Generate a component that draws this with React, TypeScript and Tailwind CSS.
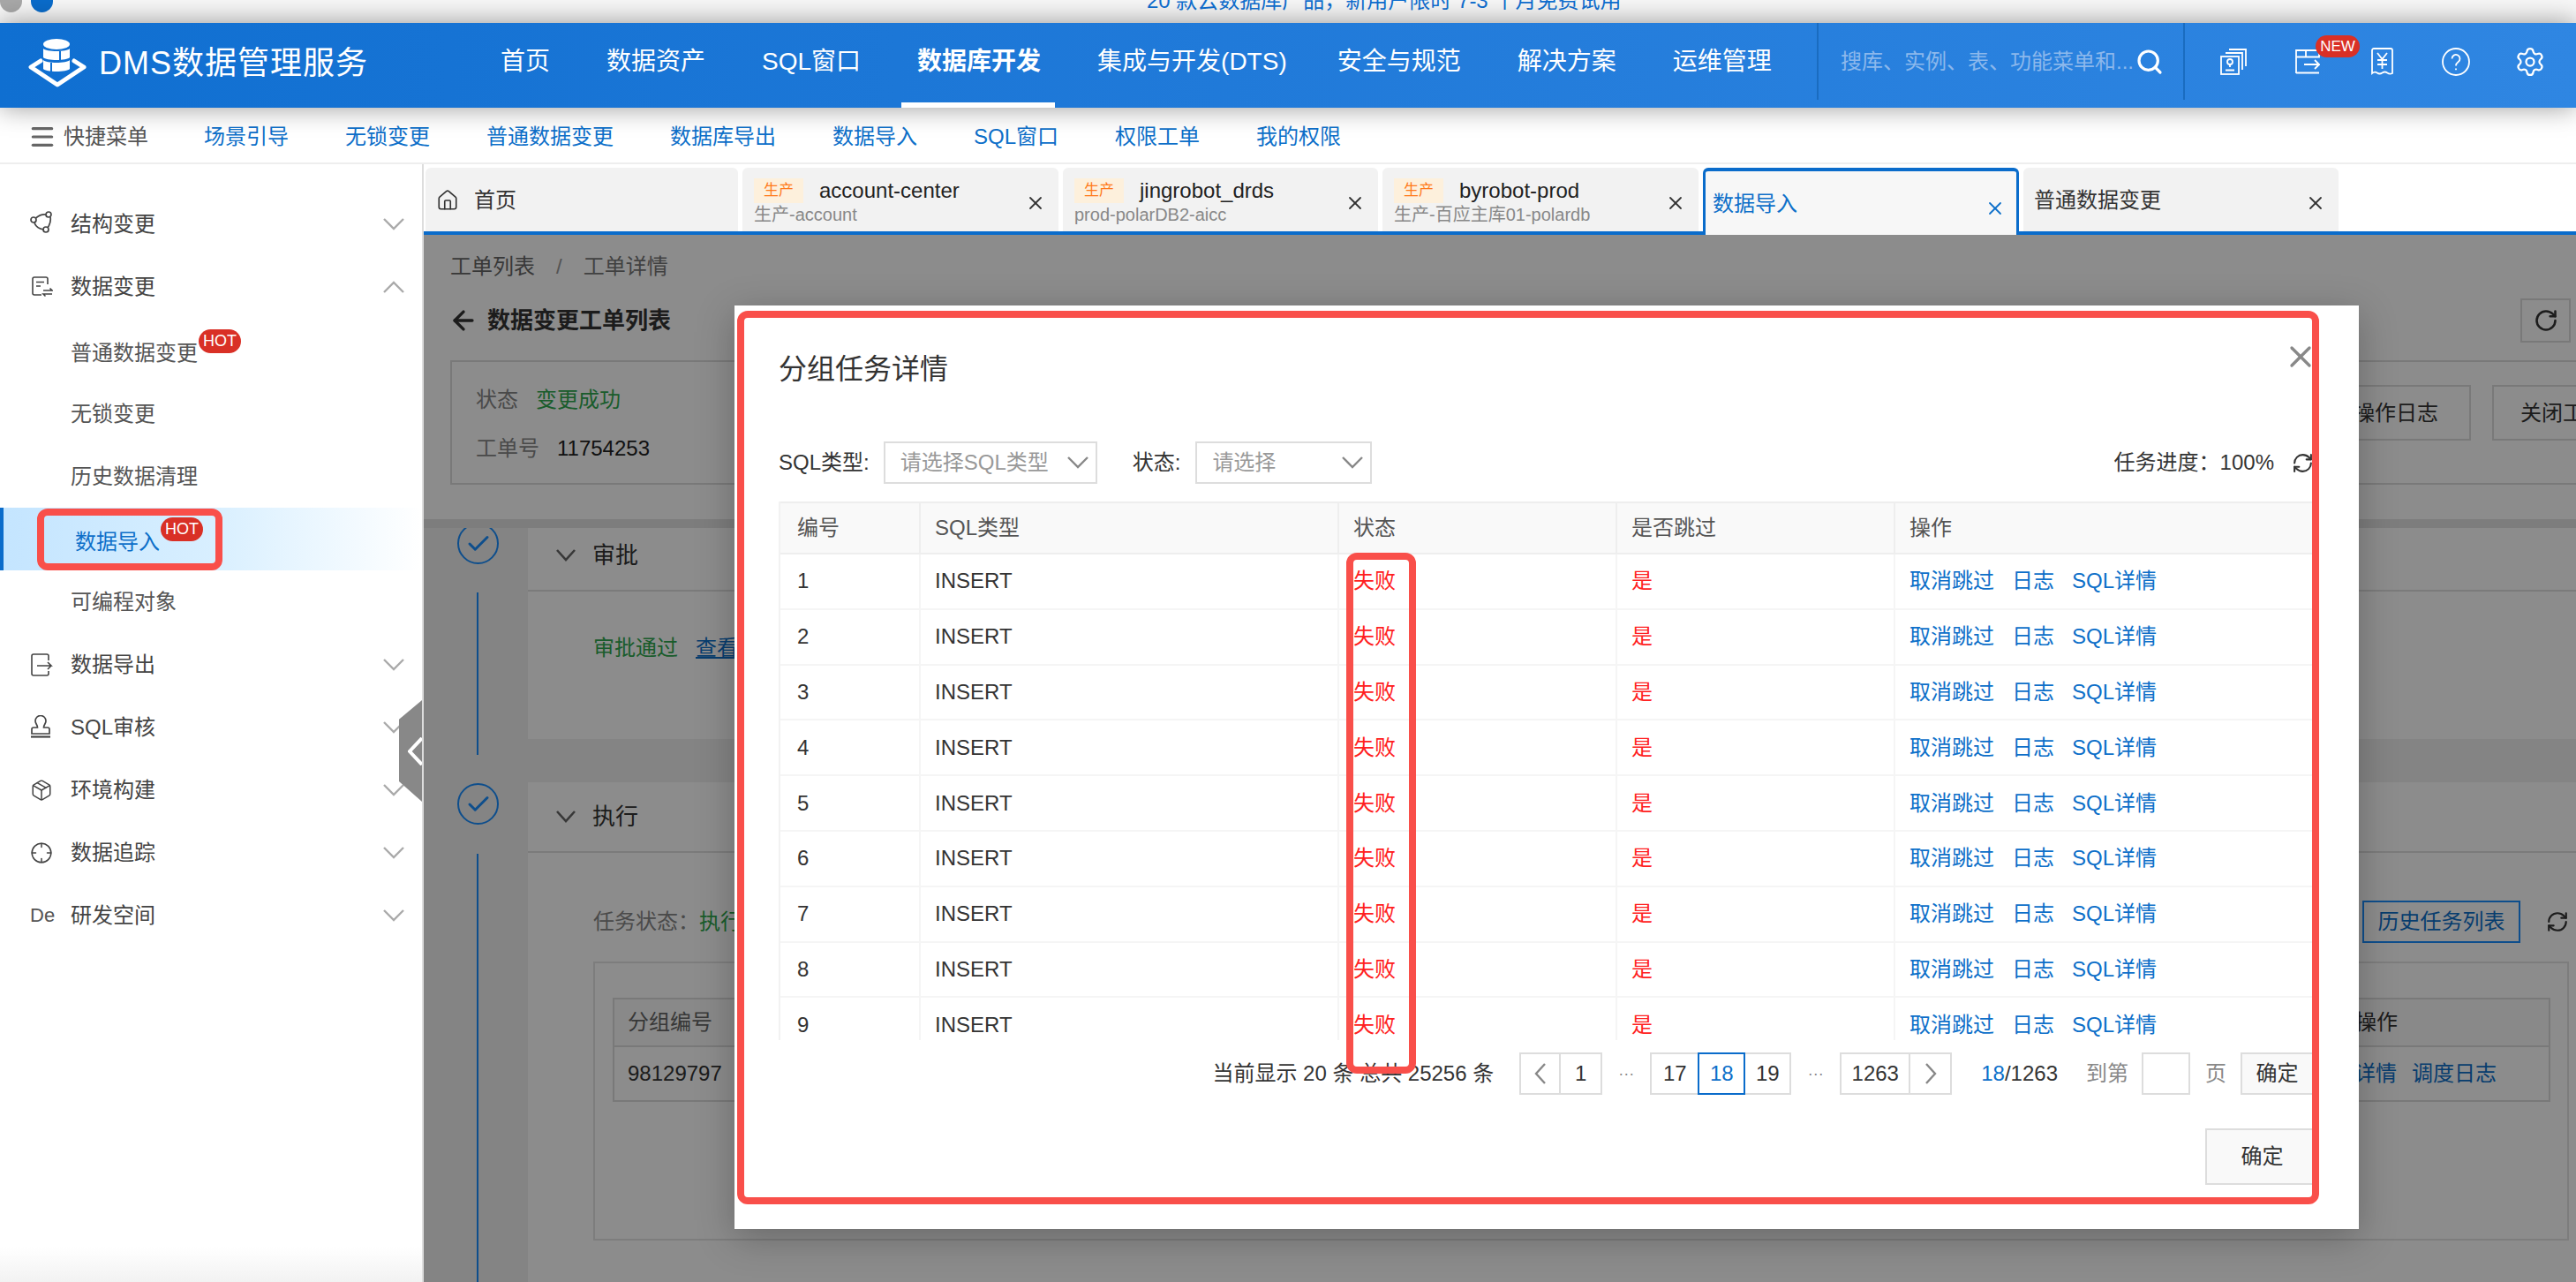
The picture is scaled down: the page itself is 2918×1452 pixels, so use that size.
import {ArrowLeft, Crosshair, House, Menu, Package, RefreshCw, RotateCw, Search, Settings, X, Check} from "lucide-react"

const navItems = ["首页", "数据资产", "SQL窗口", "数据库开发", "集成与开发(DTS)", "安全与规范", "解决方案", "运维管理"]
const quickLinks = ["场景引导", "无锁变更", "普通数据变更", "数据库导出", "数据导入", "SQL窗口", "权限工单", "我的权限"]
const rows = [1, 2, 3, 4, 5, 6, 7, 8, 9]

const Chevron = ({up}: {up?: boolean}) => (
  <svg width="24" height="14" viewBox="0 0 24 14" fill="none" stroke="#aaaaaa" strokeWidth="2.4" className="absolute right-[20px]">
    <path d={up ? "M1 13 12 2l11 11" : "M1 1l11 11L23 1"}/>
  </svg>
)

const IconStruct = () => (
  <svg width="26" height="26" viewBox="0 0 26 26" fill="none" stroke="#444" strokeWidth="1.7" className="-mt-[4px]">
    <circle cx="4" cy="10" r="3"/><circle cx="21" cy="4" r="3"/><circle cx="18" cy="21" r="3"/>
    <path d="M6.500 8C10 5 14 3.500 18 4M23 7c1 5-1 9-3 12M5 13c1 4 5 7 10 8"/>
  </svg>
)
const IconChange = () => (
  <svg width="24" height="24" viewBox="0 0 24 24" fill="none" stroke="#444" strokeWidth="1.6" className="ml-[2px]">
    <path d="M18 9V3a2 2 0 0 0-2-2H3a2 2 0 0 0-2 2v16a2 2 0 0 0 2 2h8M5 6.500h9M5 11h5M13 16h10l-2.500-2.500M23 20H13l2.500 2.500"/>
  </svg>
)
const IconExport = () => (
  <svg width="26" height="26" viewBox="0 0 26 26" fill="none" stroke="#444" strokeWidth="1.6">
    <path d="M21 8V3a2 2 0 0 0-2-2H4a2 2 0 0 0-2 2v20a2 2 0 0 0 2 2h15a2 2 0 0 0 2-2v-3M8 14h16l-4-4M24 14l-4 4"/>
  </svg>
)
const IconStamp = () => (
  <svg width="24" height="26" viewBox="0 0 24 26" fill="none" stroke="#444" strokeWidth="1.7" className="-mt-[2px]">
    <path d="M8.500 14C8.500 11 6 9.500 6 6.500a6 6 0 0 1 12 0C18 9.500 15.500 11 15.500 14H20a2 2 0 0 1 2 2v5H2v-5a2 2 0 0 1 2-2z"/>
    <path d="M1 24.500h22" strokeWidth="2.200"/>
  </svg>
)

const menu = [
  {name: "结构变更", icon: <IconStruct/>},
  {name: "数据变更", icon: <IconChange/>, open: true},
]
const menuBottom = [
  {name: "数据导出", icon: <IconExport/>},
  {name: "SQL审核", icon: <IconStamp/>},
  {name: "环境构建", icon: <Package size={26} strokeWidth={1.4} color="#444"/>},
  {name: "数据追踪", icon: <Crosshair size={26} strokeWidth={1.4} color="#444"/>},
  {name: "研发空间", icon: <span className="text-[22px] text-[#555]">De</span>},
]

const HotBadge = ({className}: {className: string}) => (
  <span className={`absolute flex items-center justify-center w-[48px] h-[27px] rounded-[14px] bg-[#d93026] text-white text-[18px] ${className}`}>HOT</span>
)

const MenuRow = ({name, icon, open}: {name: string, icon: React.ReactNode, open?: boolean}) => (
  <div className="relative flex items-center h-[71px] pl-[34px] text-[24px] text-[#444]">
    <span className="flex items-center w-[46px]">{icon}</span>
    {name}
    <Chevron up={open}/>
  </div>
)

const tabs = [
  {w: "w-[358px]", badge: true, title: "account-center", sub: "生产-account"},
  {w: "w-[357px]", badge: true, title: "jingrobot_drds", sub: "prod-polarDB2-aicc"},
  {w: "w-[358px]", badge: true, title: "byrobot-prod", sub: "生产-百应主库01-polardb"},
]

const Header = () => (
  <div className="relative z-20 flex h-[96px] shrink-0 bg-gradient-to-r from-[#0f6fd1] to-[#2f86e2] shadow-[0_0_28px_rgba(0,0,0,0.4)] text-white">
    <div className="flex items-center w-[567px] pl-[32px] pb-[4px] shrink-0">
      <svg width="66" height="56" viewBox="0 0 66 56" fill="none" className="shrink-0">
        <path d="M14 25 3 32l30 20 30-20-11-7" stroke="#fff" strokeWidth="5" strokeLinejoin="round" strokeLinecap="round"/>
        <ellipse cx="32" cy="6" rx="15" ry="6" fill="#fff"/>
        <path d="M17 11c3 4 27 4 30 0v10c-3 4-27 4-30 0z" fill="#fff"/>
        <path d="M17 24c3 4 27 4 30 0v10c-3 4-27 4-30 0z" fill="#fff"/>
        <path d="M36 14v10M26 27v10" stroke="#1070d2" strokeWidth="2"/>
      </svg>
      <span className="ml-[14px] text-[36px] leading-none tracking-[1px] whitespace-nowrap">DMS数据管理服务</span>
    </div>
    <div className="flex gap-[64px] w-[1491px] shrink-0 pb-[8px]">
      {navItems.map(n => (
        <div key={n} className={`relative flex items-center text-[28px] whitespace-nowrap ${n === "数据库开发" ? "font-bold" : ""} ${n === "集成与开发(DTS)" ? "-mr-[7px]" : ""}`}>
          {n}
          {n === "数据库开发" && <span className="absolute -left-[18px] -right-[16px] -bottom-[8px] h-[6px] bg-white"/>}
        </div>
      ))}
    </div>
    <div className="flex items-center justify-between w-[417px] h-[87px] shrink-0 pl-[25px] pr-[22px] border-x-2 border-[#1a6cc0]">
      <span className="text-[24px] text-[#8cb8ec] whitespace-nowrap">搜库、实例、表、功能菜单和...</span>
      <Search size={32} strokeWidth={2.4}/>
    </div>
    <div className="flex h-[87px] pl-[13px]">
      <div className="flex items-center justify-center w-[84px]">
        <svg width="30" height="30" viewBox="0 0 30 30" fill="none" stroke="#fff" strokeWidth="1.8">
          <rect x="1" y="9" width="20" height="20"/>
          <path d="M6 5h19v19M10 1h19v19M6 24.500h10"/>
          <circle cx="11" cy="15" r="3"/><path d="M11 18v3"/>
        </svg>
      </div>
      <div className="relative flex items-center justify-center w-[84px]">
        <svg width="28" height="28" viewBox="0 0 28 28" fill="none" stroke="#fff" strokeWidth="1.8">
          <path d="M1 27V1h26v7.500H1M12 1v7.500M1 26.500h26M10 17h17l-5-5M27 17l-5 5"/>
        </svg>
        <span className="absolute left-[51px] top-[14px] flex items-center justify-center w-[50px] h-[25px] rounded-[13px] bg-[#d93026] text-[17px]">NEW</span>
      </div>
      <div className="flex items-center justify-center w-[84px]">
        <svg width="25" height="31" viewBox="0 0 25 31" fill="none" stroke="#fff" strokeWidth="1.8">
          <path d="M1 29V3a2 2 0 0 1 2-2h19a2 2 0 0 1 2 2v26q-3 1.500-5.750-.5t-5.750 0-5.750 0T1 29zM7 6l5.500 7L18 6M12.500 13v11M7 14h11M7 19h11"/>
        </svg>
      </div>
      <div className="flex items-center justify-center w-[84px]">
        <svg width="32" height="32" viewBox="0 0 32 32" fill="none" stroke="#fff" strokeWidth="1.8">
          <circle cx="16" cy="16" r="15"/><path d="M11.500 12.500a4.500 4.500 0 1 1 7 3.700c-1.800 1.200-2.500 2-2.500 4.300M16 23.500v1.800"/>
        </svg>
      </div>
      <div className="flex items-center justify-center w-[84px]">
        <Settings size={36} strokeWidth={1.5}/>
      </div>
    </div>
  </div>
)

const Sidebar = () => (
  <div className="flex flex-col w-[478px] shrink-0 bg-white pt-[32px]">
    {menu.map(m => <MenuRow key={m.name} {...m}/>)}
    <div className="mt-[4px] text-[24px] text-[#555]">
      <div className="relative flex items-center h-[69px] pt-[2px] pl-[80px]">普通数据变更<HotBadge className="left-[225px] top-[9px]"/></div>
      <div className="flex items-center h-[71px] pl-[80px]">无锁变更</div>
      <div className="flex items-center h-[71px] pl-[80px]">历史数据清理</div>
      <div className="relative flex items-center h-[71px] pl-[85px] pt-[6px] border-l-4 border-[#0a6ccb] bg-gradient-to-r from-[#c4e5ff] via-[#d8efff] to-white text-[#0d6fc9]">
        <span className="-ml-[4px]">数据导入</span>
        <HotBadge className="left-[178px] top-[11px] z-40"/>
      </div>
      <div className="flex items-center h-[71px] pl-[80px]">可编程对象</div>
    </div>
    {menuBottom.map(m => <MenuRow key={m.name} {...m}/>)}
    <div className="mt-auto h-[40px] bg-gradient-to-b from-white to-[#f2f2f2]"/>
  </div>
)

const Tabs = () => (
  <div className="flex items-start gap-[5px] h-[80px] shrink-0 pt-[4px] pl-[2px] border-b-4 border-[#0a6ccb] bg-white">
    <div className="flex items-center w-[354px] h-[72px] pl-[12px] pt-[2px] bg-[#f2f2f2] rounded-t-[6px] text-[24px] text-[#333]">
      <House size={26} strokeWidth={1.5}/>
      <span className="ml-[17px]">首页</span>
    </div>
    {tabs.map(t => (
      <div key={t.title} className={`relative flex flex-col justify-center ${t.w} h-[72px] pl-[13px] pt-[4px] bg-[#f2f2f2] rounded-t-[6px]`}>
        <div className="flex items-center">
          <span className="flex items-center justify-center w-[56px] h-[28px] bg-[#fdf0dc] text-[#ff7a1a] text-[17px]">生产</span>
          <span className="ml-[18px] text-[24px] leading-[28px] text-[#222]">{t.title}</span>
        </div>
        <div className="mt-[1px] text-[20px] leading-[24px] text-[#888] whitespace-nowrap">{t.sub}</div>
        <X size={24} strokeWidth={1.8} color="#333" className="absolute right-[14px] top-[28px]"/>
      </div>
    ))}
    <div className="relative z-10 flex items-center w-[358px] h-[76px] pl-[8px] pt-[2px] bg-[#f7f7f7] rounded-t-[6px] border-x-[3px] border-t-4 border-[#0a6ccb] text-[24px] text-[#0d6fc9]">
      数据导入
      <X size={24} strokeWidth={1.8} className="absolute right-[12px] top-[30px]"/>
    </div>
    <div className="relative flex items-center w-[357px] h-[72px] pl-[12px] pt-[2px] bg-[#f2f2f2] rounded-t-[6px] text-[24px] text-[#333]">
      普通数据变更
      <X size={24} strokeWidth={1.8} className="absolute right-[14px] top-[28px]"/>
    </div>
  </div>
)

// page behind the dialog, dimmed by the overlay
const Behind = () => (
  <div className="relative flex-1 flex flex-col bg-[#f0f0f0] overflow-hidden text-[24px] text-[#333]">
    <div className="relative z-10 h-[332px] shrink-0 bg-white border-b-[10px] border-[#e4e4e4] pl-[30px] pt-[24px]">
      <div className="flex items-center h-[24px] text-[#666]">
        工单列表<span className="mx-[24px] text-[#999]">/</span><span className="text-[#777]">工单详情</span>
      </div>
      <div className="flex items-center justify-between w-[2402px] mt-[24px] h-[50px]">
        <div className="flex items-center text-[26px] font-bold">
          <ArrowLeft size={34} strokeWidth={2.4} className="-ml-[2px] mr-[10px]"/>数据变更工单列表
        </div>
        <div className="flex items-center justify-center w-[57px] h-[50px] border-2 border-[#ddd]">
          <RotateCw size={28} strokeWidth={2.2}/>
        </div>
      </div>
      <div className="flex justify-between w-[2495px] h-[141px] mt-[20px] border-2 border-[#ddd] pl-[27px] pr-[20px]">
        <div className="pt-[28px]">
          <div className="leading-[30px]"><span className="text-[#888]">状态</span><span className="ml-[20px] text-[#2fa84f]">变更成功</span></div>
          <div className="mt-[25px] leading-[30px]"><span className="text-[#888]">工单号</span><span className="ml-[20px] text-[#222]">11754253</span></div>
        </div>
        <div className="flex gap-[24px] pt-[26px]">
          <span className="flex items-center justify-center w-[170px] h-[63px] border-2 border-[#ddd]">操作日志</span>
          <span className="flex items-center justify-center w-[160px] h-[63px] border-2 border-[#ddd]">关闭工单</span>
        </div>
      </div>
    </div>
    <div className="flex flex-1 -mt-[8px]">
      <div className="flex flex-col w-[118px] shrink-0 pl-[38px]">
        <div className="flex items-center justify-center w-[47px] h-[47px] mt-[2px] rounded-full border-2 border-[#1b8fff] text-[#1b8fff]"><Check size={30} strokeWidth={2.4}/></div>
        <div className="ml-[22px] mt-[32px] w-[2px] h-[184px] bg-[#1b8fff]"/>
        <div className="flex items-center justify-center w-[47px] h-[47px] mt-[32px] rounded-full border-2 border-[#1b8fff] text-[#1b8fff]"><Check size={30} strokeWidth={2.4}/></div>
        <div className="ml-[22px] mt-[33px] w-[2px] flex-1 bg-[#1b8fff]"/>
      </div>
      <div className="flex-1 flex flex-col gap-[49px]">
        <div className="h-[247px] bg-white">
          <div className="flex items-center h-[80px] pl-[32px] border-b-2 border-[#e0e0e0] text-[26px]">
            <svg width="22" height="14" viewBox="0 0 22 14" fill="none" stroke="#666" strokeWidth="2.6" className="mr-[19px]"><path d="M1 1l10 11L21 1"/></svg>
            审批
          </div>
          <div className="pl-[74px] pt-[52px] leading-[24px]">
            <span className="text-[#2fa84f]">审批通过</span><span className="ml-[20px] text-[#0d6fc9] underline">查看详情</span>
          </div>
        </div>
        <div className="flex-1 bg-white">
          <div className="flex items-center h-[80px] pl-[32px] border-b-2 border-[#e0e0e0] text-[26px]">
            <svg width="22" height="14" viewBox="0 0 22 14" fill="none" stroke="#666" strokeWidth="2.6" className="mr-[19px]"><path d="M1 1l10 11L21 1"/></svg>
            执行
          </div>
          <div className="flex items-center justify-between h-[48px] mt-[54px] ml-[74px] mr-[8px]">
            <div><span className="text-[#888]">任务状态：</span><span className="text-[#2fa84f]">执行成功</span></div>
            <div className="flex items-center gap-[29px]">
              <span className="flex items-center justify-center w-[179px] h-[48px] border-2 border-[#1b8fff] text-[#0d6fc9]">历史任务列表</span>
              <RefreshCw size={26} strokeWidth={2}/>
            </div>
          </div>
          <div className="h-[316px] mt-[21px] ml-[74px] mr-[8px] border-2 border-[#e4e4e4] pt-[39px] pl-[20px] pr-[19px]">
            <div className="border-2 border-[#ddd]">
              <div className="grid grid-cols-[1fr_234px] items-center h-[54px] border-b-2 border-[#ddd] bg-[#fafafa]">
                <span className="pl-[15px] text-[#666]">分组编号</span><span className="pl-[15px]">操作</span>
              </div>
              <div className="grid grid-cols-[1fr_234px] items-center h-[60px]">
                <span className="pl-[15px]">98129797</span>
                <span className="flex justify-end gap-[17px] pr-[59px] text-[#0d6fc9] whitespace-nowrap"><span>查看详情</span><span>调度日志</span></span>
              </div>
            </div>
          </div>
        </div>
      </div>
    </div>
    <div className="absolute inset-0 z-20 bg-black/45"/>
  </div>
)

const Dialog = () => (
  <div className="absolute left-[832px] top-[346px] z-30 w-[1840px] h-[1046px] pl-[50px] pr-[45px] bg-white shadow-[0_10px_40px_rgba(0,0,0,0.25)] text-[24px] text-[#333]">
    <X size={40} strokeWidth={2} color="#888" className="absolute right-[46px] top-[38px]"/>
    <div className="pt-[56px] text-[32px] leading-[32px]">分组任务详情</div>
    <div className="flex items-center h-[48px] mt-[66px]">
      <span>SQL类型:</span>
      <div className="relative flex items-center w-[242px] h-[48px] ml-[16px] pl-[17px] border-2 border-[#ddd] text-[#999]">
        请选择SQL类型
        <svg width="24" height="14" viewBox="0 0 24 14" fill="none" stroke="#888" strokeWidth="2.4" className="absolute right-[8px]"><path d="M1 1l11 11L23 1"/></svg>
      </div>
      <span className="ml-[40px]">状态:</span>
      <div className="relative flex items-center w-[200px] h-[48px] ml-[17px] pl-[17px] border-2 border-[#ddd] text-[#999]">
        请选择
        <svg width="24" height="14" viewBox="0 0 24 14" fill="none" stroke="#888" strokeWidth="2.4" className="absolute right-[8px]"><path d="M1 1l11 11L23 1"/></svg>
      </div>
      <span className="ml-auto">任务进度：100%</span>
      <RefreshCw size={25} strokeWidth={2} className="ml-[20px] mr-[6px]"/>
    </div>
    <div className="h-[610px] mt-[20px] overflow-hidden border-l-2 border-[#f2f2f2]">
      <div className="flex h-[60px] border-y-2 border-[#eeeeee] bg-[#f9f9f9] text-[#555]">
        <div className="flex items-center w-[157px] pl-[19px]">编号</div>
        <div className="flex items-center w-[474px] pl-[16px] border-l-2 border-[#eeeeee]">SQL类型</div>
        <div className="flex items-center w-[315px] pl-[16px] border-l-2 border-[#eeeeee]">状态</div>
        <div className="flex items-center w-[315px] pl-[16px] border-l-2 border-[#eeeeee]">是否跳过</div>
        <div className="flex items-center flex-1 pl-[16px] border-l-2 border-[#eeeeee]">操作</div>
      </div>
      {rows.map(r => (
        <div key={r} className="flex h-[62.8px] shrink-0 border-b-2 border-[#f5f5f5]">
          <div className="flex items-center w-[157px] pl-[19px]">{r}</div>
          <div className="flex items-center w-[474px] pl-[16px] border-l-2 border-[#f5f5f5]">INSERT</div>
          <div className="flex items-center w-[315px] pl-[16px] border-l-2 border-[#f5f5f5] text-[#ff2020]">失败</div>
          <div className="flex items-center w-[315px] pl-[16px] border-l-2 border-[#f5f5f5] text-[#ff2020]">是</div>
          <div className="flex items-center flex-1 pl-[16px] gap-[20px] border-l-2 border-[#f5f5f5] text-[#0d6fc9]">
            <span>取消跳过</span><span>日志</span><span>SQL详情</span>
          </div>
        </div>
      ))}
    </div>
    <div className="flex items-center justify-end h-[48px] mt-[14px]">
      <span className="mr-[29px] whitespace-nowrap">当前显示 20 条 总共 25256 条</span>
      <div className="flex h-[48px] border-2 border-[#ddd]">
        <span className="flex items-center justify-center w-[45px] border-r-2 border-[#ddd]">
          <svg width="14" height="24" viewBox="0 0 14 24" fill="none" stroke="#888" strokeWidth="2.4"><path d="M12 1 2 12l10 11"/></svg>
        </span>
        <span className="flex items-center justify-center w-[45px]">1</span>
      </div>
      <span className="flex items-center justify-center w-[54px] text-[#888] text-[18px]">···</span>
      <div className="flex h-[48px] border-y-2 border-x-2 border-[#ddd]">
        <span className="flex items-center justify-center w-[52px]">17</span>
        <span className="flex items-center justify-center w-[54px] -my-[2px] border-2 border-[#0a6ccb] text-[#0d6fc9]">18</span>
        <span className="flex items-center justify-center w-[50px]">19</span>
      </div>
      <span className="flex items-center justify-center w-[55px] text-[#888] text-[18px]">···</span>
      <div className="flex h-[48px] border-2 border-[#ddd]">
        <span className="flex items-center justify-center w-[78px] border-r-2 border-[#ddd]">1263</span>
        <span className="flex items-center justify-center w-[45px]">
          <svg width="14" height="24" viewBox="0 0 14 24" fill="none" stroke="#888" strokeWidth="2.4"><path d="m2 1 10 11L2 23"/></svg>
        </span>
      </div>
      <span className="ml-[33px]"><span className="text-[#0d6fc9]">18</span>/1263</span>
      <span className="ml-[32px] text-[#888]">到第</span>
      <span className="w-[55px] h-[48px] ml-[15px] border-2 border-[#ddd]"/>
      <span className="ml-[17px] text-[#888]">页</span>
      <span className="flex items-center justify-center w-[89px] h-[48px] ml-[16px] pr-[6px] border-2 border-[#ddd] bg-[#f9f9f9]">确定</span>
    </div>
    <div className="flex items-center justify-center w-[129px] h-[64px] mt-[38px] ml-auto border-2 border-[#ddd] bg-[#f9f9f9]">确定</div>
  </div>
)

export default function App() {
  return (
    <div className="relative flex flex-col w-[2918px] h-[1452px] overflow-hidden bg-white [font-family:'Liberation_Sans','Noto_Sans_CJK_SC',sans-serif]">
      <div className="relative h-[26px] shrink-0 overflow-hidden bg-[#f7f7f7] pl-[1299px]">
        <span className="absolute left-0 -top-[12px] w-[25px] h-[26px] rounded-full bg-[#a8a8a8]"/>
        <span className="absolute left-[35px] -top-[12px] w-[25px] h-[26px] rounded-full bg-[#0a6ccb]"/>
        <div className="-mt-[11px] text-[24px] leading-[24px] text-[#0f6fd1] whitespace-nowrap">20 款云数据库产品，新用户限时 7-3 个月免费试用</div>
      </div>
      <Header/>
      <div className="relative z-10 flex items-center h-[64px] shrink-0 pt-[4px] pl-[34px] border-b-2 border-[#eeeeee] bg-white text-[24px]">
        <Menu size={32} strokeWidth={2.4} color="#666" className="-ml-[2px]"/>
        <span className="ml-[8px] text-[#555]">快捷菜单</span>
        <div className="flex gap-[64px] ml-[63px] text-[#0d6fc9]">
          {quickLinks.map(q => <span key={q}>{q}</span>)}
        </div>
      </div>
      <div className="flex flex-1 min-h-0">
        <Sidebar/>
        <div className="flex flex-col flex-1 min-w-0 border-l-2 border-[#dddddd]">
          <Tabs/>
          <Behind/>
        </div>
      </div>
      <Dialog/>
      {/* collapse handle on the sidebar edge */}
      <div className="absolute left-[452px] top-[793px] z-20 flex items-center justify-end w-[26px] h-[115px] bg-[#888888] [clip-path:polygon(100%_0,100%_100%,0_80%,0_19%)]">
        <svg width="16" height="32" viewBox="0 0 16 32" fill="none" stroke="#fff" strokeWidth="4"><path d="M16 1 2 16l14 15"/></svg>
      </div>
      {/* red annotation boxes from the screenshot */}
      <div className="absolute left-[42px] top-[576px] z-30 w-[210px] h-[70px] rounded-[12px] border-8 border-[#f94f4a]"/>
      <div className="absolute left-[835px] top-[352px] z-40 w-[1792px] h-[1012px] rounded-[12px] border-8 border-[#f94f4a]"/>
      <div className="absolute left-[1525px] top-[626px] z-40 w-[79px] h-[590px] rounded-[12px] border-8 border-[#f94f4a]"/>
    </div>
  )
}
